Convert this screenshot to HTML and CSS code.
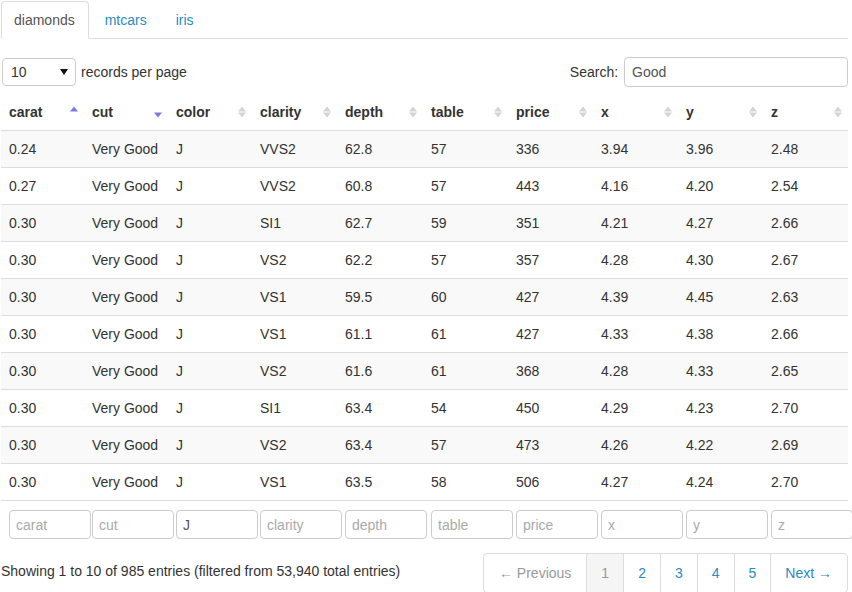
FILE: index.html
```html
<!DOCTYPE html>
<html lang="en">
<head>
  <meta charset="UTF-8">
  <title>diamonds</title>
  <link rel="stylesheet" href="styles.css">
</head>
<body>
  <div class="page">
    <ul class="tabs">
      <li class="active"><a href="#">diamonds</a></li>
      <li><a href="#">mtcars</a></li>
      <li><a href="#">iris</a></li>
    </ul>

    <div class="controls">
      <div class="length">
        <span class="select">10
          <svg width="8" height="6" viewBox="0 0 8 6"><path d="M0 0H8L4 6Z" fill="#111"/></svg>
        </span>
        records per page
      </div>
      <label class="search">Search: <input type="text" value="Good"></label>
    </div>

    <table class="grid">
      <colgroup>
        <col><col><col><col><col><col><col><col><col><col>
      </colgroup>
      <thead>
        <tr>
          <th>carat<span class="sort"><svg width="8" height="13" viewBox="0 0 8 13"><path d="M0 5.5L4 0.5L8 5.5Z" fill="#7b7bd6"/></svg></span></th>
          <th>cut<span class="sort"><svg width="8" height="13" viewBox="0 0 8 13"><path d="M0 6.5L4 11.5L8 6.5Z" fill="#7b7bd6"/></svg></span></th>
          <th>color<span class="sort"><svg width="8" height="13" viewBox="0 0 8 13"><path d="M0 5.5L4 0.5L8 5.5Z M0 6.5L4 11.5L8 6.5Z" fill="#d4d4d4"/></svg></span></th>
          <th>clarity<span class="sort"><svg width="8" height="13" viewBox="0 0 8 13"><path d="M0 5.5L4 0.5L8 5.5Z M0 6.5L4 11.5L8 6.5Z" fill="#d4d4d4"/></svg></span></th>
          <th>depth<span class="sort"><svg width="8" height="13" viewBox="0 0 8 13"><path d="M0 5.5L4 0.5L8 5.5Z M0 6.5L4 11.5L8 6.5Z" fill="#d4d4d4"/></svg></span></th>
          <th>table<span class="sort"><svg width="8" height="13" viewBox="0 0 8 13"><path d="M0 5.5L4 0.5L8 5.5Z M0 6.5L4 11.5L8 6.5Z" fill="#d4d4d4"/></svg></span></th>
          <th>price<span class="sort"><svg width="8" height="13" viewBox="0 0 8 13"><path d="M0 5.5L4 0.5L8 5.5Z M0 6.5L4 11.5L8 6.5Z" fill="#d4d4d4"/></svg></span></th>
          <th>x<span class="sort"><svg width="8" height="13" viewBox="0 0 8 13"><path d="M0 5.5L4 0.5L8 5.5Z M0 6.5L4 11.5L8 6.5Z" fill="#d4d4d4"/></svg></span></th>
          <th>y<span class="sort"><svg width="8" height="13" viewBox="0 0 8 13"><path d="M0 5.5L4 0.5L8 5.5Z M0 6.5L4 11.5L8 6.5Z" fill="#d4d4d4"/></svg></span></th>
          <th>z<span class="sort"><svg width="8" height="13" viewBox="0 0 8 13"><path d="M0 5.5L4 0.5L8 5.5Z M0 6.5L4 11.5L8 6.5Z" fill="#d4d4d4"/></svg></span></th>
        </tr>
      </thead>
      <tbody>
        <tr><td>0.24</td><td>Very Good</td><td>J</td><td>VVS2</td><td>62.8</td><td>57</td><td>336</td><td>3.94</td><td>3.96</td><td>2.48</td></tr>
        <tr><td>0.27</td><td>Very Good</td><td>J</td><td>VVS2</td><td>60.8</td><td>57</td><td>443</td><td>4.16</td><td>4.20</td><td>2.54</td></tr>
        <tr><td>0.30</td><td>Very Good</td><td>J</td><td>SI1</td><td>62.7</td><td>59</td><td>351</td><td>4.21</td><td>4.27</td><td>2.66</td></tr>
        <tr><td>0.30</td><td>Very Good</td><td>J</td><td>VS2</td><td>62.2</td><td>57</td><td>357</td><td>4.28</td><td>4.30</td><td>2.67</td></tr>
        <tr><td>0.30</td><td>Very Good</td><td>J</td><td>VS1</td><td>59.5</td><td>60</td><td>427</td><td>4.39</td><td>4.45</td><td>2.63</td></tr>
        <tr><td>0.30</td><td>Very Good</td><td>J</td><td>VS1</td><td>61.1</td><td>61</td><td>427</td><td>4.33</td><td>4.38</td><td>2.66</td></tr>
        <tr><td>0.30</td><td>Very Good</td><td>J</td><td>VS2</td><td>61.6</td><td>61</td><td>368</td><td>4.28</td><td>4.33</td><td>2.65</td></tr>
        <tr><td>0.30</td><td>Very Good</td><td>J</td><td>SI1</td><td>63.4</td><td>54</td><td>450</td><td>4.29</td><td>4.23</td><td>2.70</td></tr>
        <tr><td>0.30</td><td>Very Good</td><td>J</td><td>VS2</td><td>63.4</td><td>57</td><td>473</td><td>4.26</td><td>4.22</td><td>2.69</td></tr>
        <tr><td>0.30</td><td>Very Good</td><td>J</td><td>VS1</td><td>63.5</td><td>58</td><td>506</td><td>4.27</td><td>4.24</td><td>2.70</td></tr>
      </tbody>
      <tfoot>
        <tr>
          <td><input type="text" placeholder="carat"></td>
          <td><input type="text" placeholder="cut"></td>
          <td><input type="text" value="J"></td>
          <td><input type="text" placeholder="clarity"></td>
          <td><input type="text" placeholder="depth"></td>
          <td><input type="text" placeholder="table"></td>
          <td><input type="text" placeholder="price"></td>
          <td><input type="text" placeholder="x"></td>
          <td><input type="text" placeholder="y"></td>
          <td><input type="text" placeholder="z"></td>
        </tr>
      </tfoot>
    </table>

    <div class="bottom">
      <div class="info">Showing 1 to 10 of 985 entries (filtered from 53,940 total entries)</div>
      <ul class="pager">
        <li class="disabled prev"><a href="#">&larr; Previous</a></li>
        <li class="current"><a href="#">1</a></li>
        <li><a href="#">2</a></li>
        <li><a href="#">3</a></li>
        <li><a href="#">4</a></li>
        <li><a href="#">5</a></li>
        <li class="next"><a href="#">Next &rarr;</a></li>
      </ul>
    </div>
  </div>
</body>
</html>
```

FILE: styles.css
```css
html, body {
  overflow: hidden;
}

body {
  margin: 0;
  font-family: "Liberation Sans", Arial, sans-serif;
  font-size: 14px;
  line-height: 20px;
  color: #333;
  background: #fff;
}

.page {
  width: 847px;
  padding: 1px 0 0 1px;
}

/* tabs */
.tabs {
  display: flex;
  list-style: none;
  margin: 0;
  padding: 0;
  border-bottom: 1px solid #ddd;
}

.tabs li {
  margin-right: 2px;
  margin-bottom: -1px;
}

.tabs a {
  display: block;
  padding: 8px 12px 8px 13px;
  border: 1px solid transparent;
  border-radius: 4px 4px 0 0;
  color: #2a8cc2;
  text-decoration: none;
}

.tabs .active a {
  padding: 8px 13px 8px 12px;
  color: #555;
  background: #fff;
  border-color: #ddd #ddd transparent;
}

/* length + search */
.controls {
  display: flex;
  justify-content: space-between;
  align-items: center;
  margin-top: 18px;
  padding-left: 1px;
}

.length {
  display: flex;
  align-items: center;
}

.select {
  display: flex;
  align-items: center;
  justify-content: space-between;
  box-sizing: border-box;
  width: 74px;
  height: 28px;
  padding: 0 7px 0 8px;
  margin-right: 5px;
  border: 1px solid #ccc;
  border-radius: 4px;
  background: #fff;
}

.search input {
  box-sizing: border-box;
  width: 224px;
  height: 30px;
  margin-left: 2px;
  padding: 0 7px;
  border: 1px solid #ccc;
  border-radius: 4px;
  font: inherit;
  color: #555;
}

/* table */
.grid {
  width: 847px;
  margin-top: 7px;
  border-collapse: collapse;
  table-layout: fixed;
}

.grid col:nth-child(1) { width: 83px; }
.grid col:nth-child(2) { width: 84px; }
.grid col:nth-child(3) { width: 84px; }
.grid col:nth-child(4) { width: 85px; }
.grid col:nth-child(5) { width: 86px; }
.grid col:nth-child(6) { width: 85px; }
.grid col:nth-child(7) { width: 85px; }
.grid col:nth-child(8) { width: 85px; }
.grid col:nth-child(9) { width: 85px; }
.grid col:nth-child(10) { width: 85px; }

.grid th {
  position: relative;
  padding: 8px;
  text-align: left;
  font-weight: bold;
  border-bottom: 1px solid #ddd;
}

.sort {
  position: absolute;
  right: 6px;
  top: 12px;
  line-height: 0;
}

.grid td {
  padding: 8px;
  white-space: nowrap;
  border-top: 1px solid #ddd;
}

.grid tbody tr:first-child td {
  border-top: 0;
}

.grid tbody tr:nth-child(odd) {
  background: #f9f9f9;
}

.grid tfoot td {
  padding: 9px 0 8px 8px;
  overflow: visible;
}

.grid tfoot input {
  box-sizing: border-box;
  width: 82px;
  height: 29px;
  padding: 0 6px;
  border: 1px solid #ccc;
  border-radius: 4px;
  font: inherit;
  color: #555;
  background: #fff;
}

.grid tfoot input::placeholder {
  color: #aaa;
}

/* footer */
.bottom {
  display: flex;
  justify-content: space-between;
  margin-top: 6px;
}

.info {
  padding-top: 8px;
}

.pager {
  display: flex;
  list-style: none;
  margin: 0;
  padding: 0;
}

.pager a {
  display: block;
  padding: 9px 14px;
  margin-left: -1px;
  border: 1px solid #ddd;
  color: #2a8cc2;
  text-decoration: none;
  background: #fff;
}

.pager .prev a {
  margin-left: 0;
  padding: 9px 15px;
  border-radius: 4px 0 0 4px;
}

.pager .next a {
  padding-right: 15px;
  border-radius: 0 4px 4px 0;
}

.pager .disabled a {
  color: #999;
}

.pager .current a {
  color: #999;
  background: #f5f5f5;
}
```
